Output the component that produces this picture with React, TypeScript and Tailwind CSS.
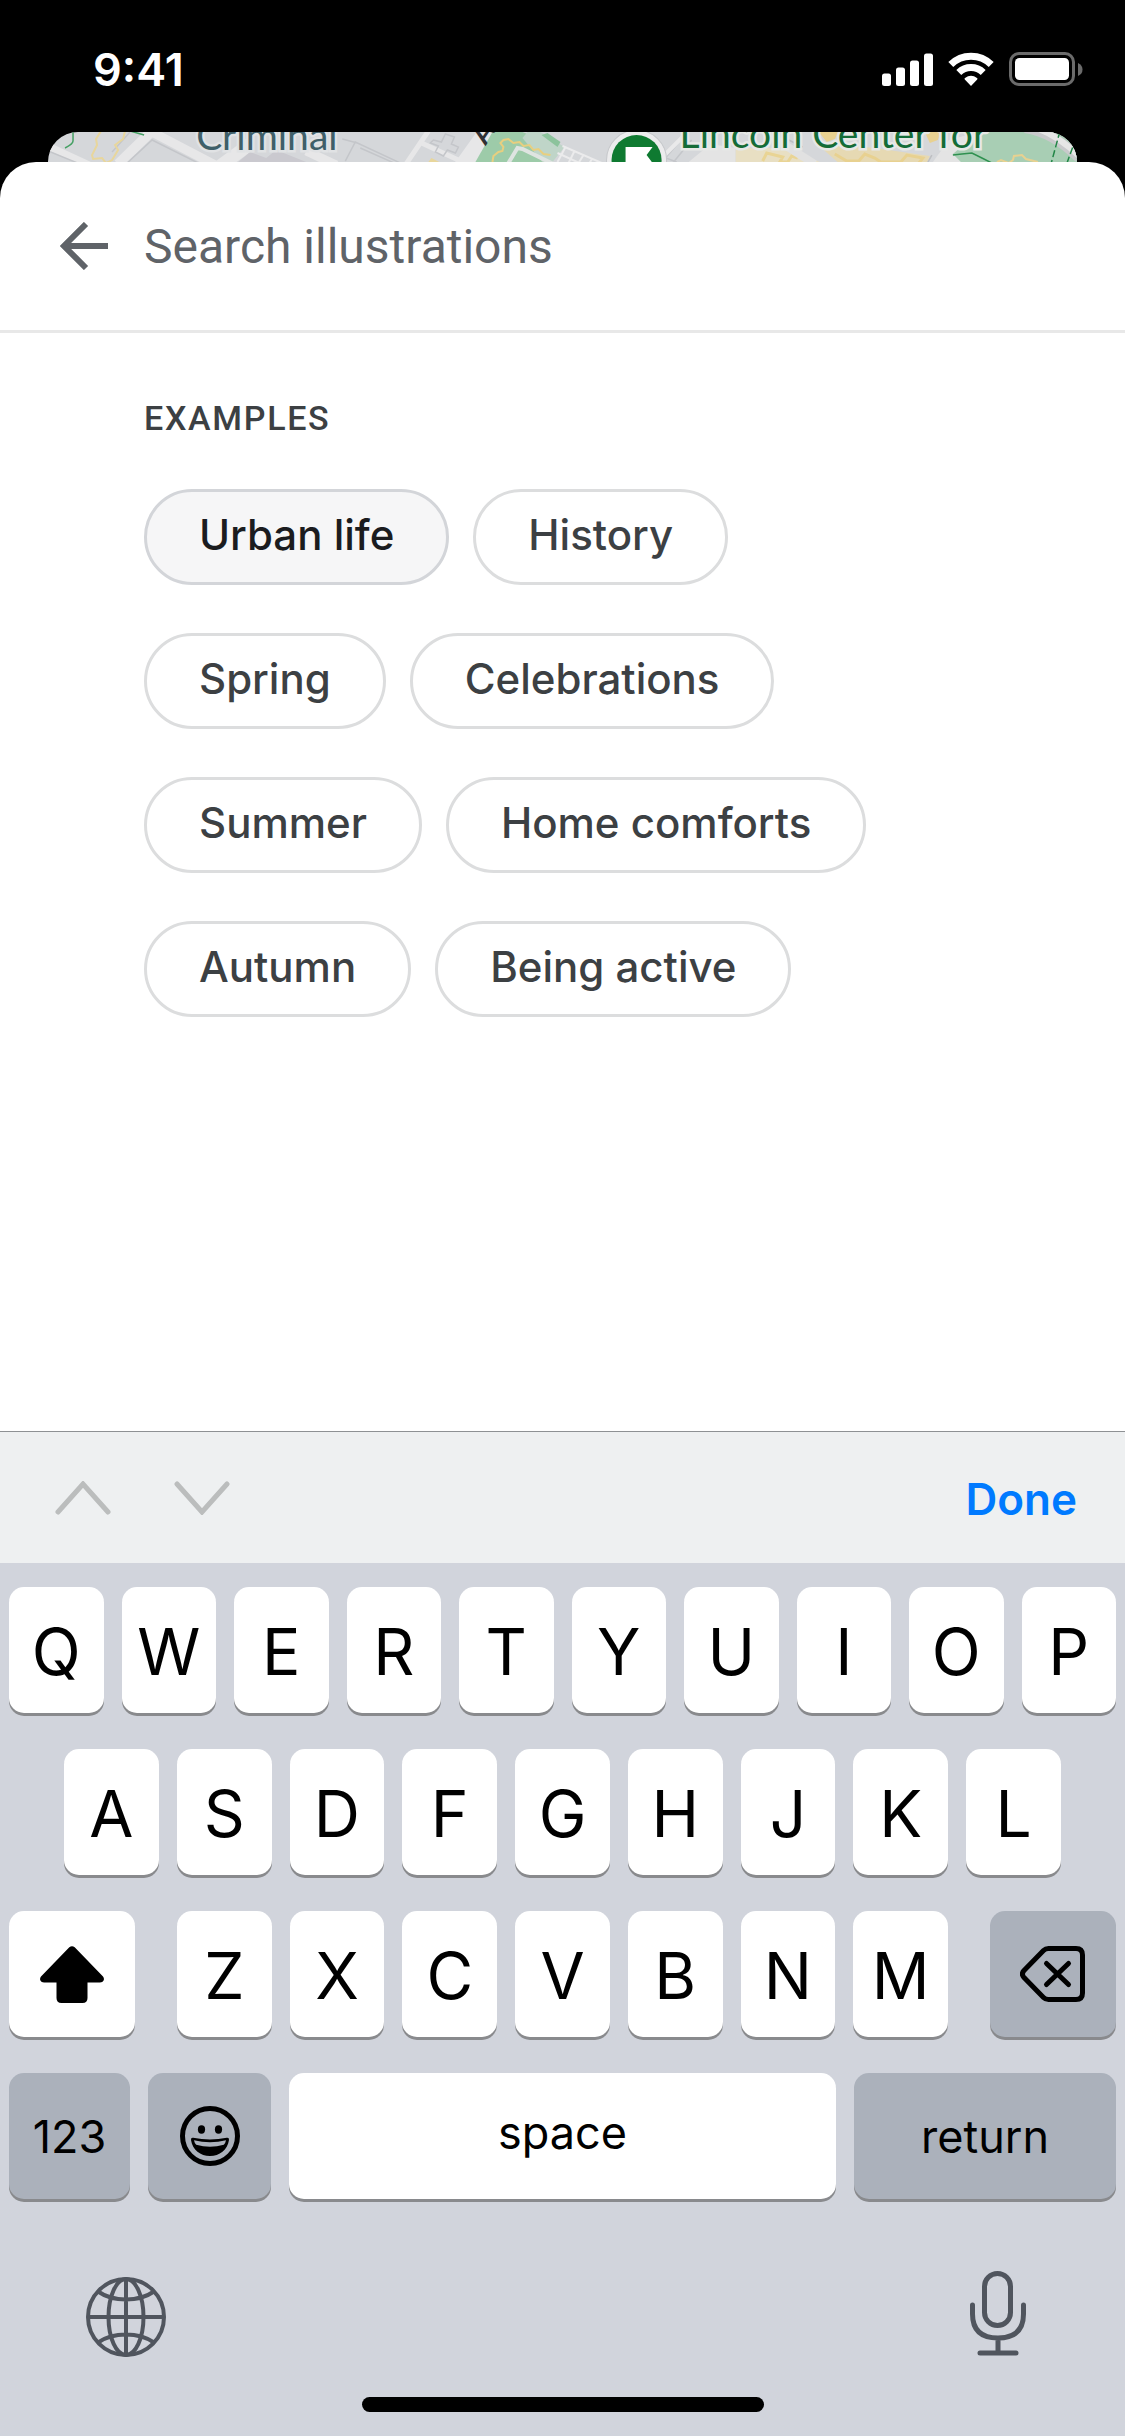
import { useState } from "react";
import type { ReactNode } from "react";
import clsx from "clsx";

const exampleRows = [
  ["Urban life", "History"],
  ["Spring", "Celebrations"],
  ["Summer", "Home comforts"],
  ["Autumn", "Being active"],
];

const StatusBar = () => (
  <header className="flex h-[132px] items-center justify-between pt-1.5 pl-[93px] pr-[42px] text-white">
    <span className="text-[45px] font-semibold leading-none">9:41</span>
    <div className="flex items-center gap-[15px]">
      <svg width="51" height="33" viewBox="0 0 51 33" fill="currentColor" aria-hidden="true">
        <rect x="0" y="20.5" width="9" height="12.5" rx="2.5" />
        <rect x="14" y="14.5" width="9" height="18.5" rx="2.5" />
        <rect x="28" y="7.5" width="9" height="25.5" rx="2.5" />
        <rect x="42" y="0.5" width="9" height="32.5" rx="2.5" />
      </svg>
      <svg width="46" height="34" viewBox="0 0 46 34" aria-hidden="true">
        <g fill="none" stroke="#fff" strokeWidth="7">
          <path d="M2.8 12.6a28.8 28.8 0 0 1 40.4 0" />
          <path d="M10.8 20.6a17.4 17.4 0 0 1 24.4 0" />
        </g>
        <path d="M23 34l-6.2-6.4q-.8-.9.2-1.6a10.2 10.2 0 0 1 12 0q1 .7.2 1.6z" fill="#fff" />
      </svg>
      <svg width="74" height="34" viewBox="0 0 74 34" aria-hidden="true">
        <rect x="1.5" y="1.5" width="63" height="31" rx="8.5" fill="none" stroke="#6b6b6b" strokeWidth="3" />
        <rect x="6" y="6" width="54" height="22" rx="4.5" fill="#fff" />
        <path d="M69 11v13q4.500-2 4.500-6.500t-4.500-6.500z" fill="#6b6b6b" />
      </svg>
    </div>
  </header>
);

// The strip of the map page that stays visible above the sheet
const MapStrip = () => (
  <div className="mx-12 h-[30px] overflow-hidden rounded-t-[30px] bg-[#d5d7da]">
    <svg className="h-full w-full" viewBox="0 0 1028 30" preserveAspectRatio="xMidYMin slice">
      <g fill="none" stroke="#e7e7e8">
        <path d="M2 15L41 33" strokeWidth="7" />
        <path d="M107-4L70 32" strokeWidth="10" />
        <path d="M100-2L169 34" strokeWidth="9" />
        <path d="M202 12L172 34" strokeWidth="13" />
        <path d="M258 19l30 14" strokeWidth="9" />
        <path d="M357 33L380-1M371 10l52 24" strokeWidth="5" />
        <path d="M443-6L413 36" strokeWidth="17" />
      </g>
      <g fill="none" stroke="#c4c6ca" strokeWidth="1.500">
        <path d="M78 32l26-24 46 23M0 19l32 13M82 0L64 20" />
        <path d="M297 29l10-19 45 21M294 7l15 4M312 16l36 16" />
        <path d="M385 8l8 2 4-8 9 3-3 7 7 3-3 6-8-3-4 6-8-4 3-6-8-3z" />
      </g>
      <path d="M190 30l12-10 16 6 10-8 30 12z" fill="#cac9cf" />
      <g fill="none" stroke="#45a063" strokeWidth="1.500">
        <path d="M25-1v10q0 3-8 7M82-1l14 4" />
      </g>
      <path d="M53-1l-5 8 1 6-5 10 1 4 9-1 4 5 6-3 6-10-3-5 8-6 2-8" fill="none" stroke="#e8d69c" strokeWidth="2" />
      <path d="M380 30l3-4 8 4z" fill="#e8d69c" />

      {/* park */}
      <path d="M444 0h30l38 15-11 15h-74z" fill="#9dcba9" />
      <path d="M479 0h13l24 15-12 15h-10L474 6z" fill="#bfd5c8" />
      <path d="M493 3l6-2 13 9-3 5z" fill="#8cc39c" />
      <path d="M460 31l9-15 5 1 31 15" fill="none" stroke="#dfe4e1" strokeWidth="4" />
      <path d="M444 30l1-6 5-4 4-1 1-4-3-4 3-3 5-1 5 4 6-1 4 4 6-1 4 5 5-1 5 5 7 1" fill="none" stroke="#e8cf7f" strokeWidth="2" />
      <path d="M514 14l44 19M509 21l22 10M517 15l-8 15M526 19l-6 12M535 23l-5 8M544 26l-3 5" fill="none" stroke="#ebebec" strokeWidth="2" />
      <text x="437" y="14" fontSize="28" fontWeight="700" fill="#2f3034" transform="rotate(-56 437 14)" className="font-['Lato',sans-serif]">
        A
      </text>

      {/* theatre district */}
      <path d="M640 30l22-18 25 4v14z" fill="#e4e4e4" />
      <path d="M616 27l18-21M625 30l18-22M612 24l16 6" fill="none" stroke="#c4c6ca" strokeWidth="1.500" />
      <path d="M615 24l22-22" stroke="#e9e9ea" strokeWidth="4" />
      <path d="M687 16h50l34 14h-84z" fill="#e8dfc3" />
      <path d="M714 29l4-8 16 4-3 5h8l4-6 6 2" fill="none" stroke="#e9d494" strokeWidth="3" />
      <path d="M728 8l38 24" stroke="#e1e1e1" strokeWidth="8" />
      <path d="M766 10l60 6 55 8-3 7h-88z" fill="#e6d9b3" />
      <path d="M786 22l12 7h12l6-7 10 4 6 4h20l6-7 16 3-4 5" fill="none" stroke="#e8d190" strokeWidth="3" />
      <path d="M770 0h20l-4 7-8 3zM876 0h16l-3 8-8 3z" fill="#e8d190" />
      <path d="M884 30l16-22 30-8-18 30z" fill="#e4e4e4" />
      <path d="M878 32l5-9M740 8l14 7" stroke="#bdbfc2" strokeWidth="1.500" />
      <path d="M904 22l26-22h98v30H912z" fill="#a8ceb4" />
      <path d="M904 23l9-1 10-1 10 5 12 6" fill="none" stroke="#2f9150" strokeWidth="1.500" />
      <path d="M948 30l4-2 8 3 4-3 1-4 8-1 4 4 12 3" fill="none" stroke="#e8d190" strokeWidth="2" />
      <path d="M976-4q28 4 54 30" fill="none" stroke="#c8c9cb" strokeWidth="10" />
      <path d="M980-6q26 6 52 32" fill="none" stroke="#e6e6e6" strokeWidth="6" />
      <path d="M1011-1l-9 33M1027 6l-9 25" stroke="#218546" strokeWidth="1.500" strokeDasharray="7 3" />

      {/* venue pin */}
      <circle cx="588" cy="28" r="30" fill="#ececed" stroke="#c6c8cb" strokeWidth="1" />
      <circle cx="588" cy="28" r="25" fill="#0f7a31" />
      <path d="M577 15h27l-6 8 6 8h-27z" fill="#fff" />

      <g className="font-['Lato',sans-serif]" fontSize="39" fontWeight="400" strokeWidth="5" paintOrder="stroke">
        <text x="148" y="18" fill="#3f5f69" stroke="#e0e2e4">
          Criminal
        </text>
        <text x="631" y="16" fill="#146c37" stroke="#e6e8e6">
          Lincoln Center for
        </text>
      </g>
    </svg>
  </div>
);

const SearchHeader = ({ value, onChange }: { value: string; onChange: (value: string) => void }) => (
  <div className="flex h-[171px] items-center gap-9 border-b-3 border-[#e8e8e8] pl-[60px] pr-12">
    <button aria-label="Back" className="shrink-0 text-[#5f6368]">
      <svg width="48" height="48" viewBox="0 0 48 48" fill="none" stroke="currentColor" strokeWidth="6" aria-hidden="true">
        <path d="M48 24H5M26 2L4 24l22 22" />
      </svg>
    </button>
    <input
      type="text"
      aria-label="Search illustrations"
      placeholder="Search illustrations"
      value={value}
      onChange={(e) => onChange(e.target.value)}
      className="min-w-0 flex-1 pt-0.5 font-['Roboto',sans-serif] text-[48px] leading-[60px] text-[#202124] outline-none placeholder:text-[#5f6368]"
    />
  </div>
);

const Chip = ({ label, active, onClick }: { label: string; active: boolean; onClick: () => void }) => (
  <button
    onClick={onClick}
    className={clsx(
      "h-24 rounded-full border-3 px-[52px] pb-1.5 text-[42px] font-medium",
      active ? "border-[#d3d5d9] bg-[#f6f6f7] text-[#1b1c1f]" : "border-[#dcddde] bg-white text-[#3c4043]"
    )}
  >
    {label}
  </button>
);

type KeyProps = {
  children: ReactNode;
  label?: string;
  dark?: boolean;
  className?: string;
};

const Key = ({ children, label, dark, className = "min-w-0 flex-1 pt-[3px] text-[64px]" }: KeyProps) => (
  <button
    aria-label={label}
    className={clsx(
      "flex h-[126px] items-center justify-center rounded-[15px] leading-none text-black shadow-[0_3px_0_#898a8d]",
      dark ? "bg-[#abb1bb]" : "bg-white",
      className
    )}
  >
    {children}
  </button>
);

const letters = (row: string) => row.split("").map((letter) => <Key key={letter}>{letter}</Key>);

const Keyboard = () => (
  <div className="bg-[#d1d4dc] pt-6 pb-6">
    <div className="flex flex-col gap-9">
      <div className="flex gap-[18px] px-[9px]">{letters("QWERTYUIOP")}</div>
      <div className="flex gap-[18px] px-16">{letters("ASDFGHJKL")}</div>
      <div className="flex gap-[42px] px-[9px]">
        <Key label="Shift" className="w-[126px] shrink-0">
          <svg width="64" height="57" viewBox="0 0 64 57" aria-hidden="true">
            <path d="M29.300 1.300q2.700-2.300 5.400 0L63 30.500q1.500 2 .6 4-.9 2-3.600 2H47.500V52q0 5-5 5h-21q-5 0-5-5V36.500H4q-2.700 0-3.600-2-.9-2 .6-4z" />
          </svg>
        </Key>
        <div className="flex min-w-0 flex-1 gap-[18px]">{letters("ZXCVBNM")}</div>
        <Key label="Delete" dark className="w-[126px] shrink-0">
          <svg
            width="66"
            height="56"
            viewBox="0 0 66 56"
            fill="none"
            stroke="currentColor"
            strokeWidth="5"
            strokeLinecap="round"
            strokeLinejoin="round"
            aria-hidden="true"
          >
            <path d="M28.500 2.500H56q6.500 0 6.500 6.500v38q0 6.500-6.500 6.500H28.500q-3 0-5-2L4 31.500q-3.200-3.500 0-7L23.500 4.500q2-2 5-2z" />
            <path d="M26.500 17.500l22 21M48.500 17.500l-22 21" />
          </svg>
        </Key>
      </div>
      <div className="flex gap-[18px] px-[9px] text-[45px]">
        <Key dark className="w-[121px] shrink-0">
          123
        </Key>
        <Key label="Emoji" dark className="w-[123px] shrink-0">
          <svg width="60" height="60" viewBox="0 0 60 60" aria-hidden="true">
            <circle cx="30" cy="30" r="27.500" fill="none" stroke="#000" strokeWidth="5" />
            <ellipse cx="21.500" cy="23.500" rx="3.600" ry="4.200" />
            <ellipse cx="38.500" cy="23.500" rx="3.600" ry="4.200" />
            <path d="M11 34q-.3-2.600 2.200-2.200 16.800 3.600 33.600 0 2.500-.4 2.200 2.200C47.500 44 39.500 50 30 50S12.500 44 11 34z" />
            <path d="M14 34.200q16 4.200 32 0-.4 2.600-2.200 4.600-13.800 4-27.600 0-1.800-2-2.200-4.600z" fill="#abb1bb" />
          </svg>
        </Key>
        <Key className="min-w-0 flex-1 pb-2">space</Key>
        <Key dark className="w-[262px] shrink-0">
          return
        </Key>
      </div>
    </div>

    <div className="flex items-end justify-between pt-[72px] pl-[86px] pr-[99px] text-[#50555e]">
      <button aria-label="Next keyboard">
        <svg width="80" height="80" viewBox="0 0 80 80" fill="none" stroke="currentColor" strokeWidth="4" aria-hidden="true">
          <circle cx="40" cy="40" r="38" />
          <ellipse cx="40" cy="40" rx="17.500" ry="38" />
          <path d="M40 2v76M2 40h76M12 14.500q11.500 8 28 8t28-8M12 65.500q11.500-8 28-8t28 8" />
        </svg>
      </button>
      <button aria-label="Dictate">
        <svg
          width="56"
          height="86"
          viewBox="0 0 56 86"
          fill="none"
          stroke="currentColor"
          strokeWidth="5"
          strokeLinecap="round"
          aria-hidden="true"
        >
          <rect x="14.500" y="2.500" width="26" height="52" rx="13" />
          <path d="M2.500 34v9q0 24 25.500 24t25.500-24v-9M28 67v15M10 82h36" />
        </svg>
      </button>
    </div>
    <div className="mx-auto mt-10 h-[15px] w-[402px] rounded-full bg-black" />
  </div>
);

export default function App() {
  const [search, setSearch] = useState("");
  const [active, setActive] = useState("Urban life");

  return (
    <div className="flex min-h-screen flex-col bg-black font-['Inter',sans-serif]">
      <StatusBar />
      <MapStrip />
      <main className="flex flex-1 flex-col overflow-hidden rounded-t-[36px] bg-white">
        <SearchHeader value={search} onChange={setSearch} />
        <section className="flex-1 px-36 pt-[65px]">
          <h2 className="font-['Roboto',sans-serif] text-[34px] font-medium leading-10 tracking-wider text-[#3c4043]">
            EXAMPLES
          </h2>
          <div className="mt-[51px] flex flex-col gap-12">
            {exampleRows.map((row) => (
              <div key={row[0]} className="flex gap-6">
                {row.map((label) => (
                  <Chip key={label} label={label} active={label === active} onClick={() => setActive(label)} />
                ))}
              </div>
            ))}
          </div>
        </section>

        <div className="flex h-[132px] items-center justify-between border-t border-[#8e9194] bg-[#eef0f1] px-12">
          <div className="flex gap-[57px] pl-1 text-[#bbbdbd]">
            <button aria-label="Previous field">
              <svg width="62" height="34" viewBox="0 0 62 34" fill="none" stroke="currentColor" strokeWidth="5" strokeLinecap="round" aria-hidden="true">
                <path d="M6 31L31 3l25 28" />
              </svg>
            </button>
            <button aria-label="Next field">
              <svg width="62" height="34" viewBox="0 0 62 34" fill="none" stroke="currentColor" strokeWidth="5" strokeLinecap="round" aria-hidden="true">
                <path d="M6 3l25 28L56 3" />
              </svg>
            </button>
          </div>
          <button className="pt-0.5 text-[44px] font-semibold leading-none text-[#007aff]">Done</button>
        </div>
        <Keyboard />
      </main>
    </div>
  );
}
